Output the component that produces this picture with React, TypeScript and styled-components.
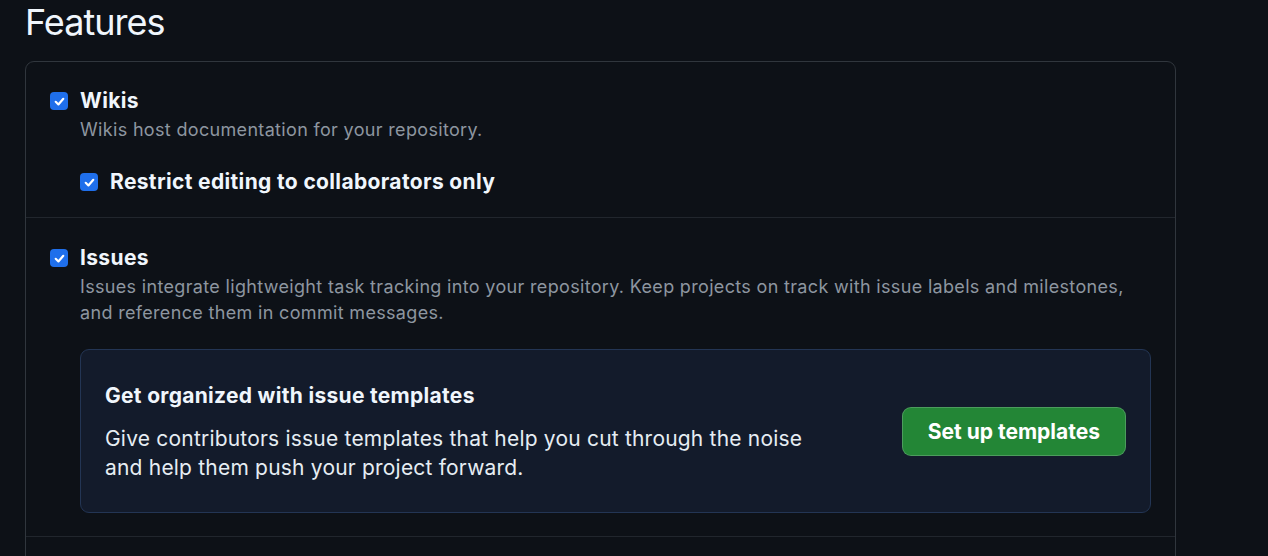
import React from "react";
import styled, { createGlobalStyle } from "styled-components";

const GlobalStyle = createGlobalStyle`
  html, body {
    margin: 0;
    padding: 0;
    background: #0d1117;
  }
  body {
    font-family: Inter, "Noto Sans", "Liberation Sans", sans-serif;
    color: #e6edf3;
    -webkit-font-smoothing: antialiased;
  }
`;

export default function App() {
  return (
    <>
      <GlobalStyle />
      <Page>
        <Title>Features</Title>
        <FeatureBox>
          <FeatureRow>
            <CheckLine>
              <Checkbox />
              <CheckLabel>Wikis</CheckLabel>
            </CheckLine>
            <Note>Wikis host documentation for your repository.</Note>
            <SubOption>
              <CheckLine>
                <Checkbox />
                <CheckLabel>Restrict editing to collaborators only</CheckLabel>
              </CheckLine>
            </SubOption>
          </FeatureRow>
          <FeatureRow>
            <CheckLine>
              <Checkbox />
              <CheckLabel>Issues</CheckLabel>
            </CheckLine>
            <Note>
              Issues integrate lightweight task tracking into your repository.
              Keep projects on track with issue labels and milestones, and
              reference them in commit messages.
            </Note>
            <Callout>
              <CalloutText>
                <CalloutTitle>Get organized with issue templates</CalloutTitle>
                <CalloutBody>
                  Give contributors issue templates that help you cut through
                  the noise and help them push your project forward.
                </CalloutBody>
              </CalloutText>
              <GreenButton type="button">Set up templates</GreenButton>
            </Callout>
          </FeatureRow>
          <FeatureRow />
        </FeatureBox>
      </Page>
    </>
  );
}

const Checkbox = () => (
  <CheckSquare>
    <svg width="13" height="13" viewBox="0 0 12 12" fill="none">
      <path
        d="M2.5 6.3 L5 8.7 L9.5 3.5"
        stroke="#fff"
        strokeWidth="2"
        strokeLinecap="round"
        strokeLinejoin="round"
      />
    </svg>
  </CheckSquare>
);

const Page = styled.div`
  padding: 0 92px 0 25px;
`;

const Title = styled.h2`
  margin: 0 0 16px;
  font-size: 36px;
  line-height: 45px;
  font-weight: 400;
  letter-spacing: -1px;
  color: #f0f6fc;
`;

const FeatureBox = styled.div`
  width: 1151px;
  box-sizing: border-box;
  border: 1px solid #30363d;
  border-radius: 9px;
  height: 520px;
  overflow: hidden;
`;

const FeatureRow = styled.div`
  padding: 24px 24px 20px;
  border-top: 1px solid #21262d;

  &:first-child {
    border-top: none;
  }

  & + & {
    padding: 25px 24px 23px;
  }
`;

const CheckLine = styled.label`
  display: flex;
  align-items: center;
  gap: 12px;
`;

const CheckSquare = styled.span`
  display: inline-flex;
  align-items: center;
  justify-content: center;
  width: 18px;
  height: 18px;
  border-radius: 4px;
  background: #1f6feb;
  flex-shrink: 0;
`;

const CheckLabel = styled.span`
  font-size: 21px;
  line-height: 30px;
  font-weight: 700;
  letter-spacing: 0.35px;
  color: #f0f6fc;
`;

const Note = styled.p`
  margin: 1px 0 0 30px;
  font-size: 18px;
  line-height: 26px;
  letter-spacing: 0.33px;
  color: #8d96a0;
`;

const SubOption = styled.div`
  margin: 24px 0 0 30px;
`;

const Callout = styled.div`
  display: flex;
  align-items: center;
  justify-content: space-between;
  margin: 23px 0 0 30px;
  padding: 31px 24px 30px;
  background: #131b2b;
  border: 1px solid #233554;
  border-radius: 9px;
`;

const CalloutText = styled.div`
  max-width: 720px;
`;

const CalloutTitle = styled.h3`
  margin: 0;
  font-size: 21px;
  line-height: 30px;
  font-weight: 700;
  letter-spacing: 0.3px;
  color: #f0f6fc;
`;

const CalloutBody = styled.p`
  margin: 13px 0 0;
  font-size: 21px;
  line-height: 29px;
  letter-spacing: 0.2px;
  color: #e6edf3;
`;

const GreenButton = styled.button`
  height: 49px;
  padding: 0 25px;
  font-family: inherit;
  font-size: 21px;
  font-weight: 700;
  color: #fff;
  background: #238636;
  border: 1px solid rgba(240, 246, 252, 0.2);
  border-radius: 9px;
  cursor: pointer;
  white-space: nowrap;
`;
